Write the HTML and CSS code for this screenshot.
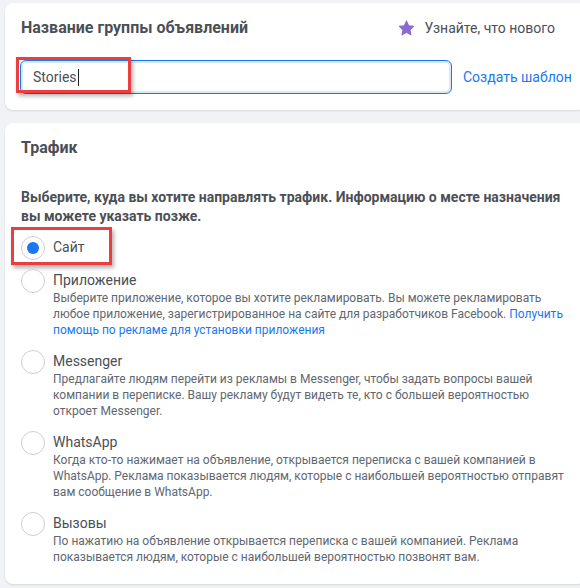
FILE: index.html
```html
<!DOCTYPE html>
<html lang="ru">
<head>
<meta charset="utf-8">
<title>Группа объявлений</title>
<link rel="stylesheet" href="styles.css">
</head>
<body>
<div class="page">
  <section class="card card-name">
    <div class="card-head">
      <h2 class="card-title">Название группы объявлений</h2>
      <div class="whats-new">
        <svg class="star" width="17" height="16" viewBox="0 0 24 23" aria-hidden="true">
          <path d="M12 1.6l3.1 6.6 7.1.9-5.2 4.9 1.3 7.1L12 17.6l-6.3 3.5 1.3-7.1L1.8 9.1l7.1-.9z" fill="#8b6bd3" stroke="#8b6bd3" stroke-width="1.6" stroke-linejoin="round"/>
        </svg>
        <span>Узнайте, что нового</span>
      </div>
    </div>
    <div class="name-row">
      <div class="name-input">
        <span class="name-value">Stories</span><span class="caret"></span>
        <span class="highlight highlight-input"></span>
      </div>
      <a class="link create-template" href="#">Создать шаблон</a>
    </div>
  </section>

  <section class="card card-traffic">
    <h2 class="card-title">Трафик</h2>
    <p class="lead">Выберите, куда вы хотите направлять трафик. Информацию о месте назначения вы можете указать позже.</p>
    <ul class="radio-list">
      <li class="radio-item radio-item-site">
        <span class="radio checked"></span>
        <div class="radio-body">
          <div class="radio-title">Сайт</div>
        </div>
        <span class="highlight highlight-site"></span>
      </li>
      <li class="radio-item">
        <span class="radio"></span>
        <div class="radio-body">
          <div class="radio-title">Приложение</div>
          <div class="radio-desc">Выберите приложение, которое вы хотите рекламировать. Вы можете рекламировать любое приложение, зарегистрированное на сайте для разработчиков Facebook. <a class="link" href="#">Получить помощь по рекламе для установки приложения</a></div>
        </div>
      </li>
      <li class="radio-item">
        <span class="radio"></span>
        <div class="radio-body">
          <div class="radio-title">Messenger</div>
          <div class="radio-desc">Предлагайте людям перейти из рекламы в Messenger, чтобы задать вопросы вашей компании в переписке. Вашу рекламу будут видеть те, кто с большей вероятностью откроет Messenger.</div>
        </div>
      </li>
      <li class="radio-item">
        <span class="radio"></span>
        <div class="radio-body">
          <div class="radio-title">WhatsApp</div>
          <div class="radio-desc">Когда кто-то нажимает на объявление, открывается переписка с вашей компанией в WhatsApp. Реклама показывается людям, которые с наибольшей вероятностью отправят вам сообщение в WhatsApp.</div>
        </div>
      </li>
      <li class="radio-item">
        <span class="radio"></span>
        <div class="radio-body">
          <div class="radio-title">Вызовы</div>
          <div class="radio-desc">По нажатию на объявление открывается переписка с вашей компанией. Реклама показывается людям, которые с наибольшей вероятностью позвонят вам.</div>
        </div>
      </li>
    </ul>
  </section>
</div>
</body>
</html>
```

FILE: styles.css
```css
* { box-sizing: border-box; }

html, body {
  margin: 0;
  padding: 0;
  background: #f0f2f5;
  overflow: hidden;
}

body {
  font-family: Roboto, "Noto Sans", "Liberation Sans", sans-serif;
  color: #4b4f56;
  width: 580px;
  height: 588px;
}

.page {
  padding: 3px 0 0 5px;
  width: 600px;
}

.card {
  background: #fff;
  width: 580px;
  border-radius: 8px;
  box-shadow: 0 1px 2px rgba(0, 0, 0, 0.12);
  padding: 15px 0 16px 16px;
}

.card-traffic {
  margin-top: 13px;
  padding-bottom: 19px;
  padding-right: 16px;
}

.card-title {
  margin: 0;
  font-size: 16px;
  line-height: 20px;
  font-weight: 700;
  color: #4b4f56;
}

.card-head {
  display: flex;
  align-items: center;
  justify-content: space-between;
  padding-right: 30px;
}

.whats-new {
  display: flex;
  align-items: center;
  gap: 9px;
  font-size: 14px;
  line-height: 20px;
  color: #4b4f56;
}

.star { display: block; margin-top: -1px; }

.name-row {
  display: flex;
  align-items: center;
  gap: 11px;
  margin-top: 22px;
  margin-left: -1px;
}

.name-input {
  position: relative;
  width: 432px;
  height: 34px;
  border: 1px solid #1877f2;
  border-radius: 6px;
  box-shadow: inset 0 0 0 2px #dce8fc;
  display: flex;
  align-items: center;
  padding-left: 12px;
  font-size: 14px;
  color: #4b4f56;
}

.caret {
  display: inline-block;
  width: 1px;
  height: 17px;
  background: #1c1e21;
  margin-left: 1px;
}

.link {
  color: #1877f2;
  text-decoration: none;
}

.create-template {
  font-size: 14px;
  line-height: 20px;
  white-space: nowrap;
}

.highlight {
  position: absolute;
  border: 3px solid #ec3d3f;
  box-shadow: 2px 3px 4px rgba(0, 0, 0, 0.3);
  pointer-events: none;
}

.highlight-input {
  left: -5px;
  top: -4px;
  width: 115px;
  height: 36px;
}

.lead {
  margin: 30px 0 0;
  font-size: 14px;
  line-height: 19px;
  font-weight: 700;
  color: #4b4f56;
}

.radio-list {
  list-style: none;
  margin: 10px 0 0;
  padding: 0;
  display: flex;
  flex-direction: column;
  gap: 12px;
}

.radio-item {
  position: relative;
  display: flex;
  align-items: flex-start;
  gap: 8px;
}

.radio-item-site { margin-bottom: -3px; }

.radio {
  flex: none;
  width: 24px;
  height: 24px;
  border-radius: 50%;
  border: 1px solid #ccd0d5;
  background: #fff;
  display: flex;
  align-items: center;
  justify-content: center;
}

.radio.checked::after {
  content: "";
  width: 12px;
  height: 12px;
  border-radius: 50%;
  background: #1877f2;
}

.radio-body {
  padding-top: 1px;
  min-width: 0;
}

.radio-title {
  font-size: 14px;
  line-height: 20px;
  color: #4b4f56;
}

.radio-desc {
  font-size: 12px;
  line-height: 16px;
  color: #606770;
}

.highlight-site {
  left: -10px;
  top: -9px;
  width: 101px;
  height: 38px;
}
```
